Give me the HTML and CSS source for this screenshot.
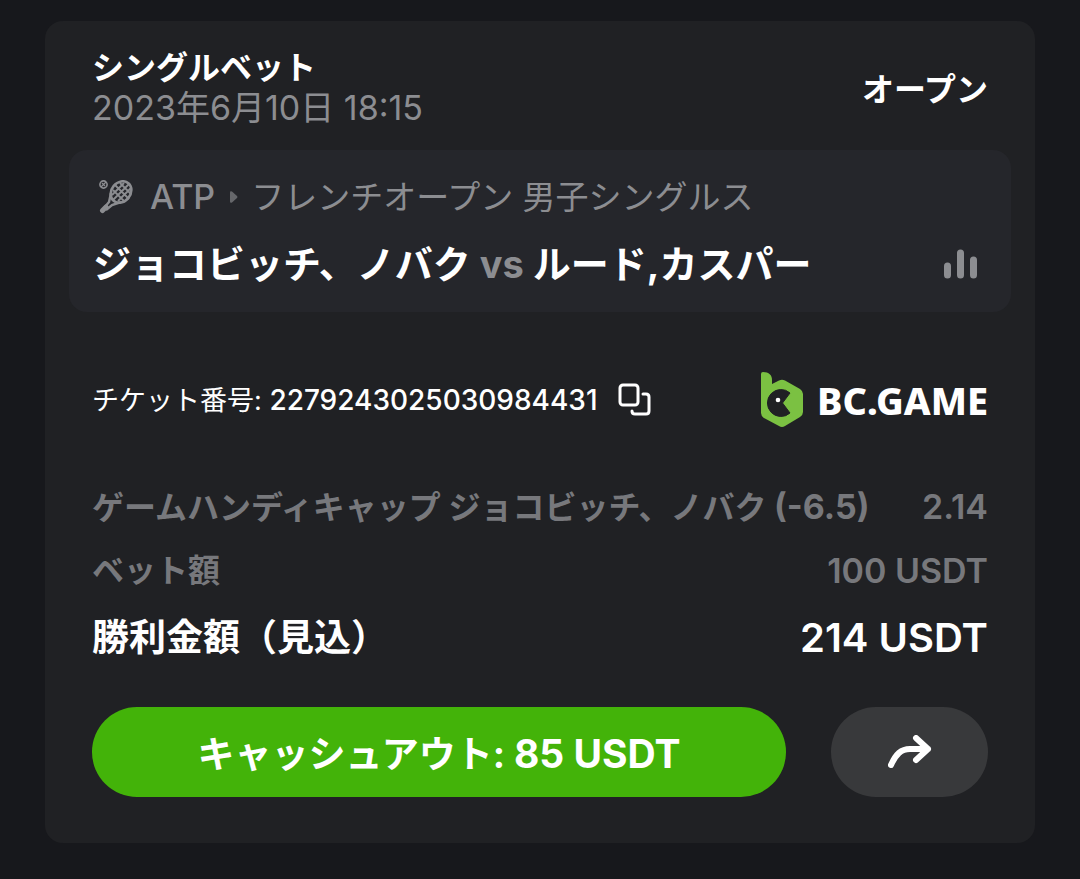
FILE: index.html
```
<!DOCTYPE html>
<html lang="ja">
<head>
    <meta charset="UTF-8">
    <meta name="viewport" content="width=device-width, initial-scale=1.0">
    <title>シングルベット</title>
    <link rel="stylesheet" href="styles.css">
</head>
<body>
    <main class="card">
        <div class="card-header">
            <div>
                <h1 class="bet-type">シングルベット</h1>
                <p class="bet-date">2023年6月10日 18:15</p>
            </div>
            <span class="status">オープン</span>
        </div>

        <section class="match">
            <div class="league">
                <svg class="racket" viewBox="0 0 34 34" fill="none" stroke="currentColor" aria-hidden="true">
                    <circle cx="4.5" cy="4.5" r="3.6" stroke-width="1.6"/>
                    <path d="M2 7L7 2M3 3L6 6" stroke-width="1.2"/>
                    <ellipse cx="22" cy="12" rx="9.5" ry="11.5" transform="rotate(40 22 12)" stroke-width="2.6"/>
                    <path d="M14 10L26 22M16 5L30 19M21 3L32 14M13 15L25 3M14 20L30 4M19 21L32 8" stroke-width="1.8"/>
                    <path d="M12 13L10 22L5 28M22 22L13 25L7 30" stroke-width="2.4"/>
                    <path d="M7 27L3.500 30.500" stroke-width="5" stroke-linecap="round"/>
                </svg>
                <span>ATP</span>
                <svg class="arrow" viewBox="0 0 10 14" aria-hidden="true">
                    <path d="M1 2.500Q1 0.500 3 1.500L8 6Q9 7 8 8L3 12.500Q1 13.500 1 11.500Z" fill="#66676b"/>
                </svg>
                <span class="league-name">フレンチオープン 男子シングルス</span>
            </div>
            <div class="players">
                <h2 class="player-names">ジョコビッチ、ノバク <span class="vs">vs</span> ルード,カスパー</h2>
                <svg class="stats" viewBox="0 0 33 30" stroke="currentColor" stroke-width="7" stroke-linecap="round" aria-hidden="true">
                    <path d="M3.500 17V26M16.500 4V26M29.500 11V26"/>
                </svg>
            </div>
        </section>

        <div class="ticket">
            <span class="ticket-label">チケット番号: <span class="ticket-number">2279243025030984431</span></span>
            <button class="copy-button" type="button" aria-label="コピー">
                <svg viewBox="0 0 34 34" fill="none" stroke="currentColor" stroke-width="3" stroke-linecap="round" aria-hidden="true">
                    <rect x="2" y="2" width="18" height="20" rx="3"/>
                    <path d="M25 11H28Q31 11 31 14V28Q31 31 28 31H17Q14 31 14 28"/>
                </svg>
            </button>
            <div class="brand">
                <svg class="brand-mark" viewBox="0 0 42 56" aria-hidden="true">
                    <path d="M0 2Q0 0 2 0C8 0 11 3 11 8V12L18 8.500Q21 7 24 8.500L39 17Q42 19 42 22V40Q42 43 39 45L24 54Q21 56 18 54L3 46Q0 44 0 41Z" fill="#7bc142"/>
                    <path d="M29 21A13.500 13.500 0 1 0 29 41L21.500 31Z" fill="#202124" stroke="#202124" stroke-linejoin="round"/>
                    <circle cx="17" cy="28" r="2.300" fill="#fff"/>
                </svg>
                <span class="brand-name">BC.GAME</span>
            </div>
        </div>

        <dl class="summary">
            <div class="row">
                <dt>ゲームハンディキャップ ジョコビッチ、ノバク <span class="handicap">(-6.5)</span></dt>
                <dd>2.14</dd>
            </div>
            <div class="row">
                <dt>ベット額</dt>
                <dd>100 USDT</dd>
            </div>
            <div class="row total">
                <dt>勝利金額（見込）</dt>
                <dd>214 USDT</dd>
            </div>
        </dl>

        <div class="actions">
            <button class="cashout-button" type="button">キャッシュアウト: <span class="cashout-amount">85 USDT</span></button>
            <button class="share-button" type="button" aria-label="シェア">
                <svg viewBox="0 0 44 34" fill="none" stroke="currentColor" stroke-width="6" stroke-linecap="round" stroke-linejoin="round" aria-hidden="true">
                    <path d="M3 30C8 19 13 14 22 14H40M28 3L40 14L28 25"/>
                </svg>
            </button>
        </div>
    </main>
</body>
</html>
```
FILE: styles.css
```
* {
    box-sizing: border-box;
}
body {
    margin: 0;
    padding: 21px 45px 36px;
    background-color: #17181c;
    color: #fff;
    font-family: "Inter", "Noto Sans CJK JP", sans-serif;
}
h1, h2, p, dl, dd {
    margin: 0;
}
button {
    border: none;
    padding: 0;
    background: none;
    color: inherit;
    font-family: inherit;
    cursor: pointer;
}
svg {
    display: block;
    flex: none;
}
.card {
    padding: 27px 24px 46px;
    border-radius: 18px;
    background-color: #202124;
}
.card-header {
    display: flex;
    justify-content: space-between;
    align-items: center;
    padding: 0 23px;
    margin-bottom: 22px;
}
.bet-type {
    font-size: 32px;
    line-height: 40px;
    font-weight: 700;
}
.bet-date {
    font-size: 34px;
    line-height: 40px;
    color: #8c8d91;
}
.status {
    padding-top: 4px;
    font-size: 32px;
    line-height: 40px;
    font-weight: 700;
}
.match {
    padding: 25px 34px 24px 24px;
    border-radius: 18px;
    background-color: #25262b;
}
.league {
    display: flex;
    align-items: center;
    font-size: 34px;
    line-height: 44px;
    font-weight: 500;
    color: #8c8d91;
    white-space: nowrap;
}
.racket {
    width: 34px;
    height: 34px;
    margin: 0 17px 0 6px;
}
.arrow {
    width: 10px;
    height: 14px;
    margin: 0 12px 0 14px;
}
.league-name {
    font-size: 33px;
    font-weight: 400;
}
.players {
    display: flex;
    justify-content: space-between;
    align-items: center;
    margin-top: 21px;
    color: #8c8d91;
}
.player-names {
    font-size: 38px;
    line-height: 48px;
    font-weight: 700;
    color: #fff;
    white-space: nowrap;
}
.vs {
    color: #8c8d91;
}
.stats {
    width: 33px;
    height: 30px;
}
.ticket {
    display: flex;
    align-items: center;
    padding: 0 23px;
    margin-top: 60px;
    white-space: nowrap;
}
.ticket-label {
    font-size: 27px;
    line-height: 40px;
}
.ticket-number {
    font-size: 28px;
    font-weight: 500;
}
.copy-button {
    margin-left: 20px;
}
.copy-button svg {
    width: 34px;
    height: 34px;
}
.brand {
    display: flex;
    align-items: center;
    gap: 14px;
    margin-left: auto;
}
.brand-mark {
    width: 42px;
    height: 56px;
}
.brand-name {
    font-family: "Noto Sans", sans-serif;
    font-size: 38px;
    line-height: 56px;
    font-weight: 800;
}
.summary {
    padding: 0 23px;
    margin-top: 55px;
}
.row {
    display: flex;
    justify-content: space-between;
    font-size: 34px;
    line-height: 48px;
    font-weight: 600;
    margin-bottom: 15px;
    color: #77787c;
    white-space: nowrap;
}
.row dt {
    font-size: 32px;
    font-weight: 700;
}
.handicap {
    font-size: 34px;
}
.total {
    font-size: 40px;
    line-height: 56px;
    margin: 0;
    color: #fff;
}
.total dt {
    font-size: 37px;
}
.actions {
    display: flex;
    gap: 45px;
    padding: 0 23px;
    margin-top: 41px;
}
.cashout-button {
    flex: 1;
    height: 90px;
    border-radius: 45px;
    background-color: #43b309;
    font-size: 37px;
    font-weight: 700;
}
.cashout-amount {
    font-size: 39px;
}
.share-button {
    display: flex;
    justify-content: center;
    align-items: center;
    width: 157px;
    height: 90px;
    border-radius: 45px;
    background-color: #38393b;
}
.share-button svg {
    width: 44px;
    height: 34px;
}
```
